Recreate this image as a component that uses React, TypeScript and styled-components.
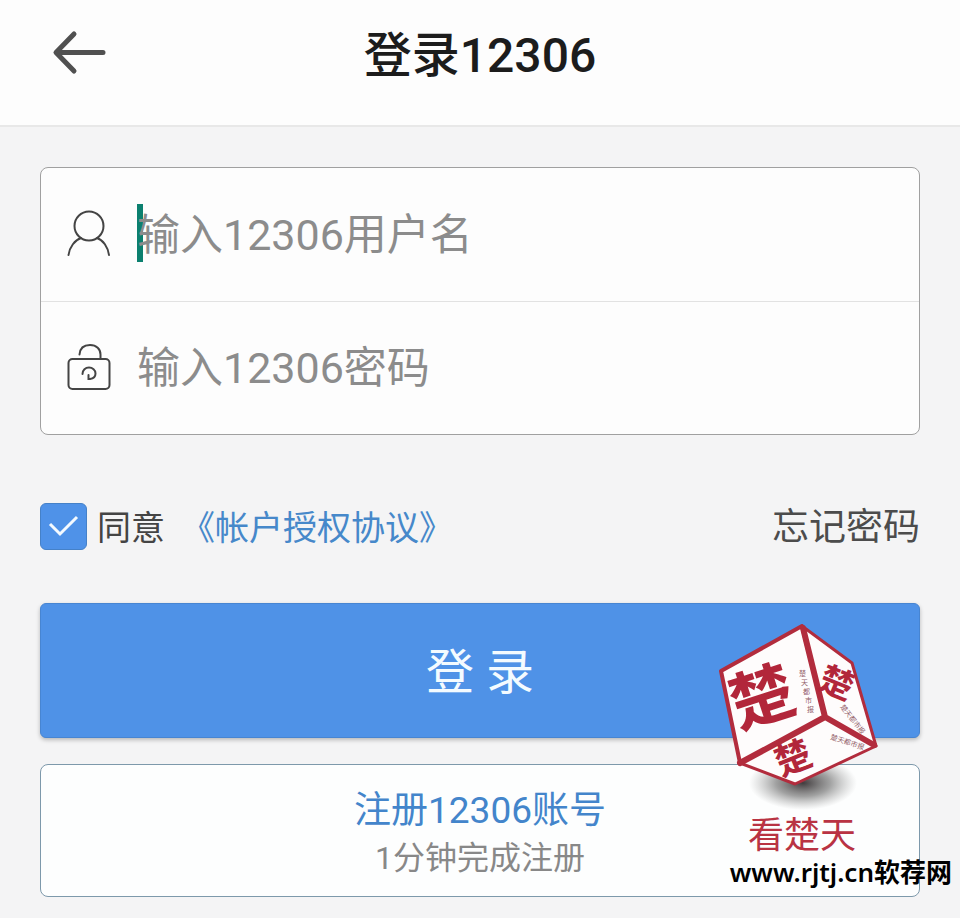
import React from "react";
import styled, { createGlobalStyle } from "styled-components";

const GlobalStyle = createGlobalStyle`
  *, *::before, *::after { box-sizing: border-box; }
  body {
    margin: 0;
    background: #f4f4f5;
    color: #444;
    font-family: Roboto, "Noto Sans CJK SC", sans-serif;
  }
  button, input { font-family: inherit; }
`;

const Page = styled.div`
  display: flex;
  flex-direction: column;
  min-height: 100vh;
`;

const Header = styled.header`
  display: grid;
  grid-template-columns: 64px 1fr 64px;
  align-items: start;
  padding: 20px 48px 33px;
  background: #fdfdfd;
  border-bottom: 2px solid #e8e8e8;
`;

const BackButton = styled.button`
  display: flex;
  width: 64px;
  height: 64px;
  padding: 0;
  align-items: center;
  border: 0;
  background: none;
  color: #505050;
  cursor: pointer;
`;

const Title = styled.h1`
  margin: 0;
  color: #1c1c1c;
  font-size: 48px;
  font-weight: 500;
  line-height: 72px;
  text-align: center;
`;

const Main = styled.main`
  display: flex;
  flex-direction: column;
  padding: 40px 40px 20px;
`;

const Fields = styled.div`
  border: 1px solid #a0a0a0;
  border-radius: 8px;
  background: #fdfdfd;
`;

const Field = styled.label`
  display: grid;
  grid-template-columns: 44px 1fr;
  gap: 26px;
  align-items: center;
  height: 133px;
  padding: 0 26px;

  & + & {
    border-top: 1px solid #e2e2e2;
  }
`;

const InputWrap = styled.span`
  position: relative;
  display: flex;
`;

const Caret = styled.span`
  position: absolute;
  left: 0;
  top: 1px;
  width: 6px;
  height: 58px;
  background: #0b806f;
`;

const TextInput = styled.input`
  position: relative;
  width: 100%;
  height: 64px;
  padding: 0;
  border: 0;
  outline: 0;
  background: transparent;
  color: #333;
  font-size: 43px;

  &::placeholder {
    color: #8c8c8c;
    opacity: 1;
  }
`;

const Options = styled.div`
  display: flex;
  align-items: center;
  justify-content: space-between;
  height: 48px;
  margin: 67px 0 53px;
`;

const Agreement = styled.div`
  display: flex;
  align-items: center;
  gap: 16px;
`;

const CheckLabel = styled.label`
  display: flex;
  align-items: center;
  gap: 10px;
`;

const CheckText = styled.span`
  padding-top: 4px;
  color: #444;
  font-size: 34px;
  line-height: 48px;
`;

const CheckBox = styled.span`
  display: grid;
  width: 47px;
  height: 47px;

  > * { grid-area: 1 / 1; }
`;

const CheckInput = styled.input`
  appearance: none;
  margin: 0;
  border: 1px solid #4581c8;
  border-radius: 6px;
  background: #fff;

  &:checked { background: #4f92e8; }
`;

const CheckMark = styled.svg`
  pointer-events: none;
`;

const TextLink = styled.a<{ $strong?: boolean }>`
  padding-top: 4px;
  color: ${(p) => (p.$strong ? "#4c4c4c" : "#4688ca")};
  font-size: ${(p) => (p.$strong ? "37px" : "34px")};
  line-height: 48px;
  text-decoration: none;
`;

const Actions = styled.div`
  position: relative;
  display: flex;
  flex-direction: column;
  gap: 26px;
`;

const LoginButton = styled.button`
  height: 135px;
  padding: 4px 0 0;
  border: 1px solid #4785d2;
  border-radius: 6px;
  background: #4f92e7;
  box-shadow: 0 2px 4px rgba(0, 0, 0, 0.25);
  color: #f4fbff;
  font-size: 48px;
  line-height: 72px;
  cursor: pointer;
`;

const RegisterButton = styled.button`
  display: flex;
  flex-direction: column;
  align-items: center;
  justify-content: center;
  height: 133px;
  padding: 6px 0 0;
  border: 1px solid #7d99ab;
  border-radius: 8px;
  background: #fdfefe;
  cursor: pointer;
`;

const RegisterTitle = styled.span`
  color: #4385cb;
  font-size: 37px;
  line-height: 48px;
`;

const RegisterNote = styled.span`
  color: #888;
  font-size: 32px;
  line-height: 46px;
`;

const Brand = styled.div`
  position: absolute;
  top: 12px;
  right: 28px;
  display: flex;
  flex-direction: column;
  align-items: center;
  gap: 2px;
  pointer-events: none;
`;

const BrandName = styled.span`
  color: #b93343;
  font-size: 36px;
  line-height: 38px;
`;

const SiteMark = styled.div`
  position: absolute;
  right: -32px;
  bottom: 10px;
  color: #000;
  font-family: "Noto Sans", "Noto Sans CJK SC", sans-serif;
  font-size: 26px;
  font-weight: 600;
  line-height: 30px;
  white-space: nowrap;
  pointer-events: none;
`;

const FaceText = styled.text`
  fill: #b2263a;
  font-family: "Noto Sans CJK SC", sans-serif;
  font-weight: 700;
  text-anchor: middle;
`;

const SmallFaceText = styled.text`
  fill: #93606a;
  font-family: "Noto Sans CJK SC", sans-serif;
  font-size: 7px;
`;

function BackIcon() {
  return (
    <svg width="64" height="48" viewBox="0 0 64 48" fill="none" stroke="currentColor" strokeWidth="5" strokeLinecap="round" strokeLinejoin="round" aria-hidden="true">
      <path d="M55 24.500H9M26 6 8 24.500 26 43" />
    </svg>
  );
}

function UserIcon() {
  return (
    <svg width="44" height="52" viewBox="0 0 44 52" fill="none" stroke="#444" strokeWidth="2" strokeLinecap="round" aria-hidden="true">
      <circle cx="22" cy="17" r="14.5" />
      <path d="M1.500 46C2.500 38 8 31 14 29M30 29c6 2 11 9 12 17" />
    </svg>
  );
}

function LockIcon() {
  return (
    <svg width="44" height="52" viewBox="0 0 44 52" fill="none" stroke="#444" strokeWidth="2" strokeLinecap="round" aria-hidden="true">
      <rect x="1.5" y="17" width="41" height="30" rx="4" />
      <path d="M12.500 12.500C13 6 17 3 23 3c6.500 0 10.500 4 10.500 9.500V17" />
      <path d="M15.500 32c0-4 3-6.500 6.500-6.500s6.500 2.500 6.500 6c0 3-2 5-5.500 5.500l-1.500 0v-4" />
    </svg>
  );
}

function CubeLogo() {
  return (
    <svg width="180" height="200" viewBox="712 615 180 200" role="img" aria-label="看楚天">
      <defs>
        <radialGradient id="cubeShadow">
          <stop offset="0" stopColor="#2c2628" stopOpacity="0.9" />
          <stop offset="0.5" stopColor="#555" stopOpacity="0.55" />
          <stop offset="1" stopColor="#888" stopOpacity="0" />
        </radialGradient>
      </defs>
      <ellipse cx="803" cy="783" rx="54" ry="27" fill="url(#cubeShadow)" />
      <g stroke="#b22c3d" strokeLinejoin="round" fill="#fefcfc">
        <path strokeWidth="4" d="M721 671 802 626 825 717 740 763Z" />
        <path strokeWidth="3" d="M802 626 852 663 876 746 825 717Z" />
        <path strokeWidth="3" d="M740 763 825 717 876 746 795 784Z" />
        <path fill="none" strokeWidth="6" strokeLinecap="round" d="M803 628 825 717 740 763M825 717 874 745" />
      </g>
      <FaceText fontSize="64" transform="translate(769 719) rotate(-18)">楚</FaceText>
      <FaceText fontSize="34" transform="translate(832 694) rotate(22)">楚</FaceText>
      <FaceText fontSize="36" transform="translate(798 770) rotate(-22)">楚</FaceText>
      <SmallFaceText>
        <tspan x="799" y="676">楚</tspan>
        <tspan x="801" y="685">天</tspan>
        <tspan x="803" y="694">都</tspan>
        <tspan x="805" y="703">市</tspan>
        <tspan x="807" y="712">报</tspan>
      </SmallFaceText>
      <SmallFaceText transform="translate(840 707) rotate(52)">楚天都市报</SmallFaceText>
      <SmallFaceText transform="translate(830 739) rotate(18)">楚天都市报</SmallFaceText>
    </svg>
  );
}

export default function App() {
  return (
    <>
      <GlobalStyle />
      <Page>
        <Header>
          <BackButton type="button" aria-label="返回">
            <BackIcon />
          </BackButton>
          <Title>登录12306</Title>
        </Header>
        <Main>
          <Fields>
            <Field>
              <UserIcon />
              <InputWrap>
                <Caret />
                <TextInput type="text" placeholder="输入12306用户名" aria-label="用户名" />
              </InputWrap>
            </Field>
            <Field>
              <LockIcon />
              <InputWrap>
                <TextInput type="password" placeholder="输入12306密码" aria-label="密码" />
              </InputWrap>
            </Field>
          </Fields>
          <Options>
            <Agreement>
              <CheckLabel>
                <CheckBox>
                  <CheckInput type="checkbox" defaultChecked />
                  <CheckMark viewBox="0 0 47 47" fill="none" stroke="#f4faff" strokeWidth="3">
                    <path d="M10 21 20 31 37 14" />
                  </CheckMark>
                </CheckBox>
                <CheckText>同意</CheckText>
              </CheckLabel>
              <TextLink href="#agreement">《帐户授权协议》</TextLink>
            </Agreement>
            <TextLink $strong href="#forgot">忘记密码</TextLink>
          </Options>
          <Actions>
            <LoginButton type="button">登 录</LoginButton>
            <RegisterButton type="button">
              <RegisterTitle>注册12306账号</RegisterTitle>
              <RegisterNote>1分钟完成注册</RegisterNote>
            </RegisterButton>
            <Brand>
              <CubeLogo />
              <BrandName>看楚天</BrandName>
            </Brand>
            <SiteMark>www.rjtj.cn软荐网</SiteMark>
          </Actions>
        </Main>
      </Page>
    </>
  );
}
